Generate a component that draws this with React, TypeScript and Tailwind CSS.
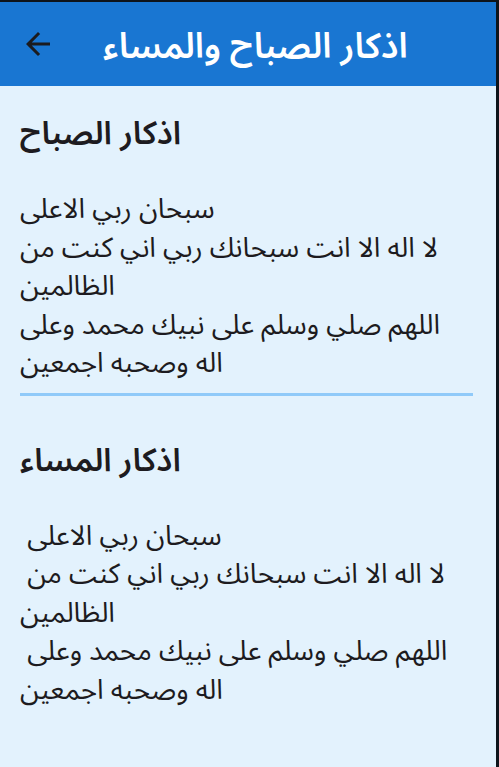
import React from "react";

const lines = [
  "سبحان ربي الاعلى",
  "لا اله الا انت سبحانك ربي اني كنت من الظالمين",
  "اللهم صلي وسلم على نبيك محمد وعلى اله وصحبه اجمعين",
];

const Section = ({ title, pad }: { title: string; pad?: boolean }) => (
  <div>
    <h2 className="text-[32px] font-semibold leading-[40px] text-[#1d1b20]">{title}</h2>
    <div className="mt-[36px] text-[27.6px] leading-[38.5px] text-[#1d1b20]">
      {lines.map((l, i) => (
        <p key={i} className="whitespace-pre-wrap">
          {pad ? " " + l : l}
        </p>
      ))}
    </div>
  </div>
);

export default function App() {
  return (
    <div className="w-[499px] h-[767px] bg-[#0e141b] pt-[2px] pr-[3px] overflow-hidden font-['Noto_Sans_Arabic_UI','Noto_Sans_Arabic',sans-serif]">
      <div className="h-full bg-[#e3f2fd] flex flex-col">
        <header className="h-[84px] bg-[#1976d2] flex items-center shrink-0">
          <div className="w-[103px] pl-[20px]">
            <svg width="36" height="36" viewBox="0 0 24 24" fill="#1b1b1f">
              <path d="M20 11H7.83l5.59-5.59L12 4l-8 8 8 8 1.41-1.41L7.83 13H20v-2z" />
            </svg>
          </div>
          <h1 className="text-[35.3px] font-semibold text-white leading-[40px]">اذكار الصباح والمساء</h1>
        </header>
        <main className="pl-[20px] pr-[23px] pt-[26px]">
          <Section title="اذكار الصباح" />
          <div className="h-[3px] bg-[#90caf9] mt-[12px] mb-[43px]" />
          <Section title="اذكار المساء" pad />
        </main>
      </div>
    </div>
  );
}
